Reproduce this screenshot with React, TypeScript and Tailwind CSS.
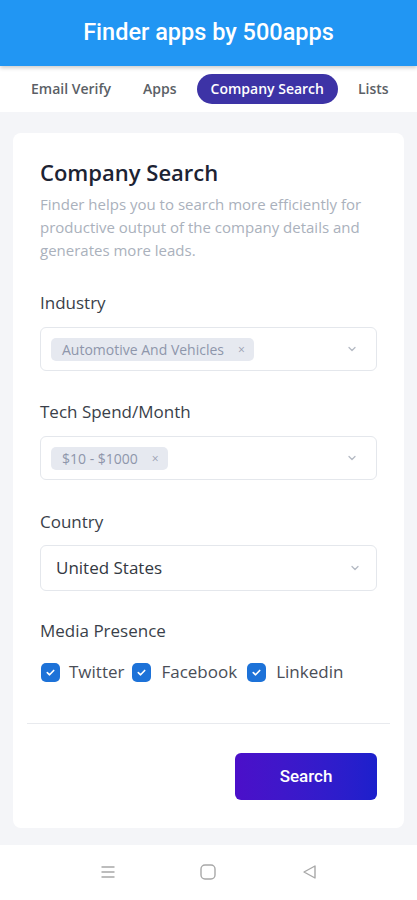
import React from 'react';

function Chevron() {
  return (
    <svg width="12" height="12" viewBox="0 0 12 12" fill="none" className="text-[#b5bac4]">
      <path d="M3 4.5 L6 7.5 L9 4.5" stroke="currentColor" strokeWidth="1.3" strokeLinecap="round" strokeLinejoin="round" />
    </svg>
  );
}

function Check() {
  return (
    <span className="w-[19px] h-[19px] rounded-[5px] bg-[#1d72d8] flex items-center justify-center shrink-0">
      <svg width="11" height="11" viewBox="0 0 12 12" fill="none">
        <path d="M2.5 6.2 L5 8.5 L9.5 3.8" stroke="white" strokeWidth="1.8" strokeLinecap="round" strokeLinejoin="round" />
      </svg>
    </span>
  );
}

function ChipSelect({ label }: { label: string }) {
  return (
    <div className="h-[44px] border border-[#e4e7ec] rounded-[6px] flex items-center justify-between pl-[10px] pr-[18px]">
      <span className="h-[23px] rounded-[5px] bg-[#e6e9f0] flex items-center pl-[11px] pr-[9px] gap-[14px] text-[14px] leading-[23px] text-[#8e96ab]">
        {label}
        <span className="text-[12px] text-[#9aa1b3]">×</span>
      </span>
      <Chevron />
    </div>
  );
}

export default function App() {
  const font = { fontFamily: '"Open Sans", "Noto Sans", sans-serif' };
  return (
    <div className="w-[417px] h-[900px] bg-[#f4f5f8] flex flex-col overflow-hidden" style={font}>
      <div className="h-[66px] shrink-0 bg-[#2196f3] flex items-center justify-center shadow-[0_2px_4px_rgba(0,0,0,0.2)] z-10">
        <h1 className="text-white text-[23.5px] font-medium" style={{ fontFamily: 'Roboto, sans-serif' }}>Finder apps by 500apps</h1>
      </div>
      <div className="h-[46px] shrink-0 bg-white flex items-center pl-[31px] pb-[1px] text-[14px] font-semibold text-[#5b5f66] whitespace-nowrap">
        <span>Email Verify</span>
        <span className="ml-[32px]">Apps</span>
        <span className="ml-[20px] h-[30px] px-[14px] rounded-full bg-[#3d33a6] text-white flex items-center">Company Search</span>
        <span className="ml-[20px]">Lists</span>
      </div>
      <div className="flex-1 px-[13px] pt-[21px] pb-[17px]">
        <div className="bg-white rounded-[8px] h-full px-[27px] pt-[25px] flex flex-col">
          <h2 className="text-[22px] leading-[28px] text-[#1c2333] font-semibold">Company Search</h2>
          <p className="mt-[7px] text-[15px] leading-[23px] text-[#aab1bc] pr-[2px]">
            Finder helps you to search more efficiently for productive output of the company details and generates more leads.
          </p>
          <div className="mt-[30px] text-[17px] leading-[22px] text-[#3a3f4a]">Industry</div>
          <div className="mt-[13px]"><ChipSelect label="Automotive And Vehicles" /></div>
          <div className="mt-[30px] text-[17px] leading-[22px] text-[#3a3f4a]">Tech Spend/Month</div>
          <div className="mt-[13px]"><ChipSelect label="$10 - $1000" /></div>
          <div className="mt-[31px] text-[17px] leading-[22px] text-[#3a3f4a]">Country</div>
          <div className="mt-[12px] h-[46px] border border-[#e4e7ec] rounded-[6px] flex items-center justify-between pl-[15px] pr-[15px]">
            <span className="text-[17px] text-[#333842]">United States</span>
            <Chevron />
          </div>
          <div className="mt-[29px] text-[17px] leading-[22px] text-[#3a3f4a]">Media Presence</div>
          <div className="mt-[19px] h-[22px] flex items-center text-[17px] leading-[22px] text-[#4a4e57] ml-[1px]">
            <Check />
            <span className="ml-[9px]">Twitter</span>
            <span className="ml-[8px]"><Check /></span>
            <span className="ml-[10px]">Facebook</span>
            <span className="ml-[10px]"><Check /></span>
            <span className="ml-[10px]">Linkedin</span>
          </div>
          <div className="mt-[40px] -mx-[13px] border-t border-[#e8eaee]" />
          <div className="mt-[29px] flex justify-end">
            <button className="w-[142px] h-[47px] rounded-[6px] bg-gradient-to-r from-[#4b0fc9] to-[#1c20cc] text-white text-[17px] font-medium" style={{ fontFamily: 'Roboto, sans-serif' }}>
              Search
            </button>
          </div>
        </div>
      </div>
      <div className="h-[55px] shrink-0 bg-white flex items-center pl-[99px] pb-[2px]">
        <svg width="18" height="16" viewBox="0 0 18 16" fill="none">
          <path d="M2.5 3 H15.5 M2.5 8 H15.5 M2.5 13 H15.5" stroke="#a8a8a8" strokeWidth="1.4" />
        </svg>
        <svg width="18" height="18" viewBox="0 0 18 18" fill="none" className="ml-[82px]">
          <rect x="2" y="2" width="14" height="14" rx="4" stroke="#a8a8a8" strokeWidth="1.4" />
        </svg>
        <svg width="18" height="18" viewBox="0 0 18 18" fill="none" className="ml-[84px]">
          <path d="M14 3 L3 9 L14 15 Z" stroke="#a8a8a8" strokeWidth="1.4" strokeLinejoin="round" />
        </svg>
      </div>
    </div>
  );
}
